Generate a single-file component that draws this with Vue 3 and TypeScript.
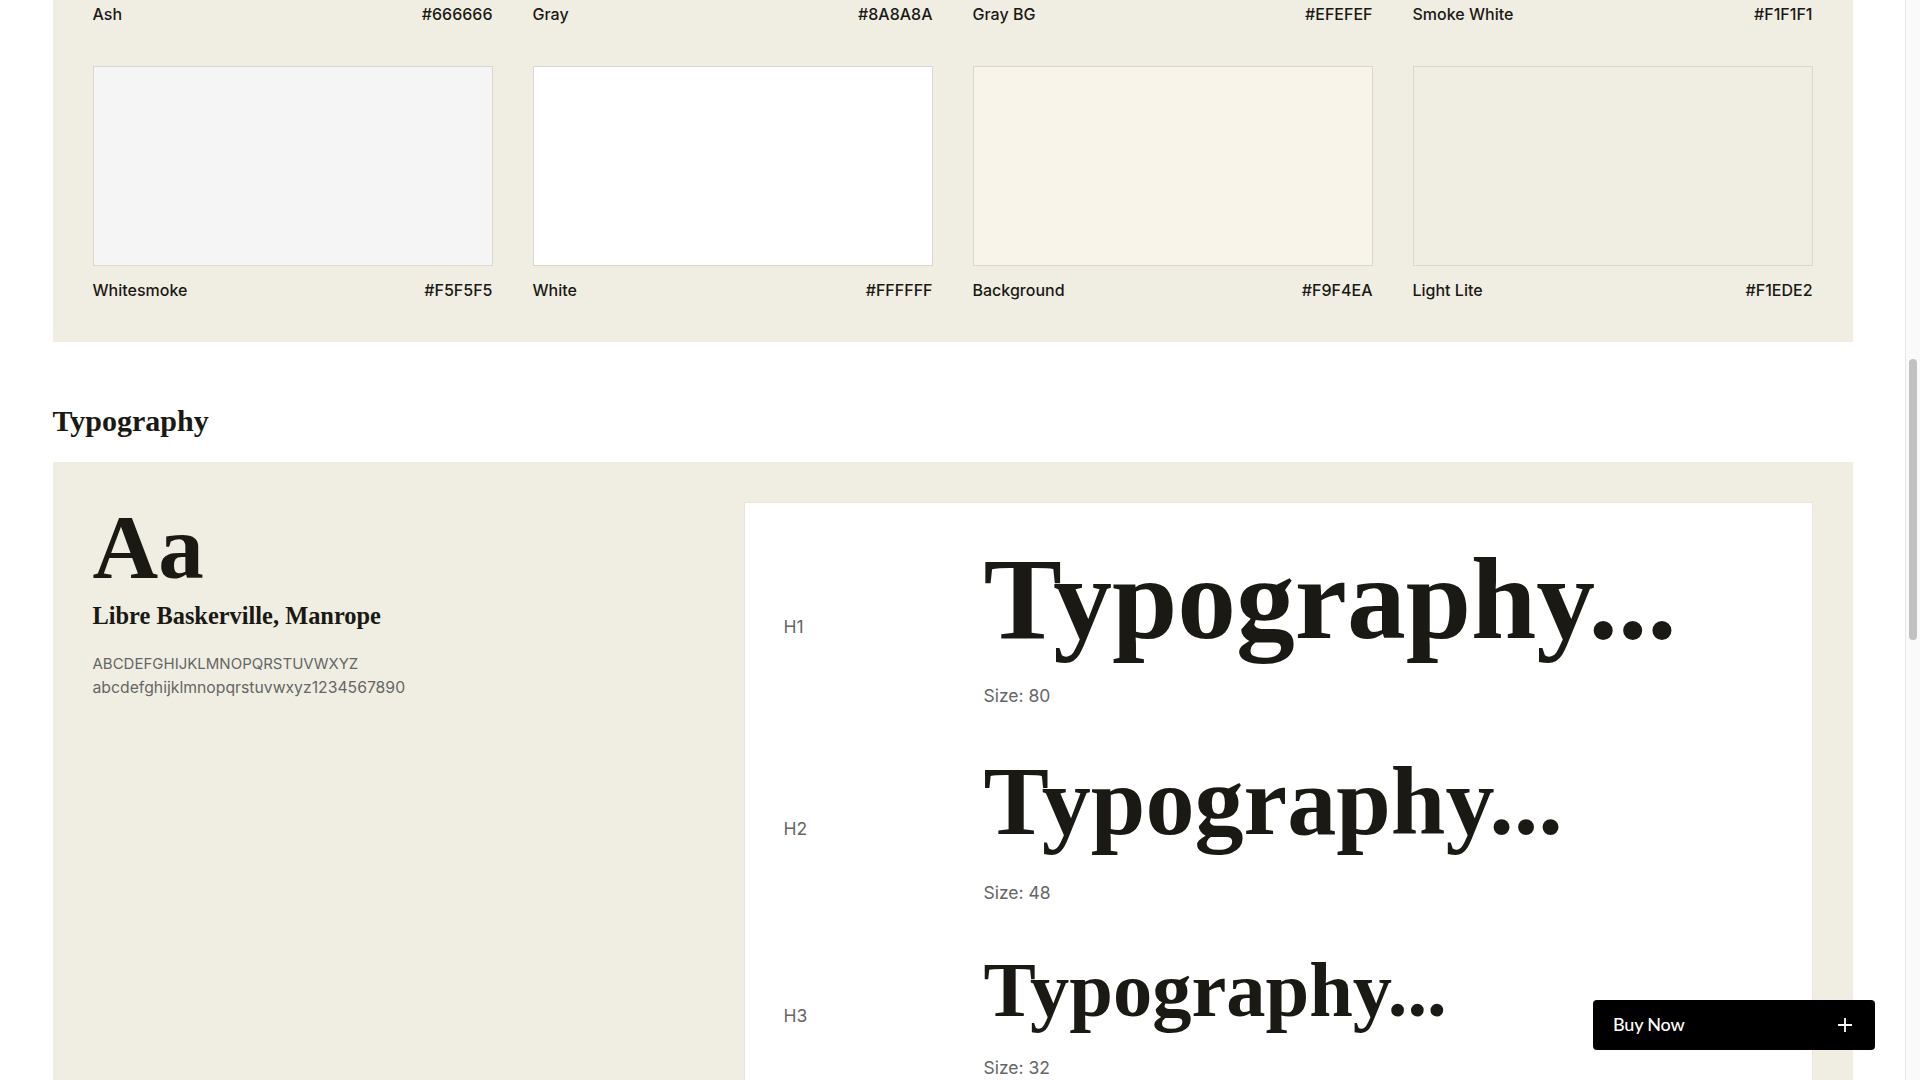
<template>
  <div class="shell">
    <div ref="scroller" class="scroller">
      <div class="page">
        <section class="panel colors">
          <div v-for="c in colors" :key="c.name" class="color">
            <div class="swatch" :style="{ background: c.fill ?? c.hex }"></div>
            <div class="color-meta">
              <span>{{ c.name }}</span>
              <span>{{ c.hex }}</span>
            </div>
          </div>
        </section>

        <h2 class="section-title">Typography</h2>

        <section class="panel type">
          <div class="type-intro">
            <div class="aa">Aa</div>
            <div class="family">Libre Baskerville, Manrope</div>
            <p class="alphabet">
              <span class="upper">ABCDEFGHIJKLMNOPQRSTUVWXYZ</span><br />
              abcdefghijklmnopqrstuvwxyz1234567890
            </p>
          </div>
          <div class="type-card">
            <div v-for="h in headings" :key="h.tag" class="type-row" :class="h.tag">
              <span class="tag">{{ h.label }}</span>
              <div>
                <div class="sample">Typography...</div>
                <div class="size">Size: {{ h.size }}</div>
              </div>
            </div>
          </div>
        </section>
      </div>
    </div>

    <div class="rail"><div class="thumb"></div></div>

    <button class="buy" type="button">
      <span>Buy Now</span>
      <svg width="14" height="14" viewBox="0 0 14 14" fill="none" stroke="#fff" stroke-width="1.8">
        <path d="M7 0v14M0 7h14" />
      </svg>
    </button>
  </div>
</template>

<script setup lang="ts">
import { onMounted, ref } from 'vue'

const scroller = ref<HTMLElement | null>(null)

const colors: { name: string; hex: string; fill?: string }[] = [
  { name: 'Ash', hex: '#666666' },
  { name: 'Gray', hex: '#8A8A8A' },
  { name: 'Gray BG', hex: '#EFEFEF' },
  { name: 'Smoke White', hex: '#F1F1F1' },
  { name: 'Whitesmoke', hex: '#F5F5F5' },
  { name: 'White', hex: '#FFFFFF' },
  { name: 'Background', hex: '#F9F4EA' },
  { name: 'Light Lite', hex: '#F1EDE2', fill: '#F0EEE3' },
]

const headings = [
  { tag: 'h1', label: 'H1', size: 80 },
  { tag: 'h2', label: 'H2', size: 48 },
  { tag: 'h3', label: 'H3', size: 32 },
]

// page is shown scrolled down to the typography section
onMounted(() => {
  if (scroller.value) scroller.value.scrollTop = 1380
})
</script>

<style>
html, body { margin: 0; overflow: hidden; background: #fff; }
</style>

<style scoped>
.shell { display: flex; height: 1080px; background: #fff; font-family: Inter, "Noto Sans", sans-serif; color: #1a1914; }
.scroller { flex: 1; overflow-y: scroll; scrollbar-width: none; }
.rail { width: 15px; flex: none; box-sizing: border-box; padding: 359px 3px 0 3px; background: #fafafa; border-left: 1px solid #e8e8e8; }
.thumb { height: 281px; background: #c1c1c1; border-radius: 4px; }
.page { box-sizing: border-box; min-height: 4151px; max-width: 1800px; margin: 0 auto; padding-top: 1130px; }
.panel { background: #f0eee3; padding: 40px; }

.colors { display: grid; grid-template-columns: repeat(4, 1fr); gap: 40px; }
.swatch { height: 200px; box-sizing: border-box; border: 1px solid #dad8ce; }
.color-meta {
  display: flex; justify-content: space-between; margin-top: 12px;
  font-size: 16px; line-height: 24px; font-weight: 450;
}

.section-title {
  margin: 59px 0 21px; font: 700 30px/40px "Liberation Serif", serif;
}

.type { display: flex; gap: 40px; }
.type-intro { width: 611px; flex: none; }
.aa { font: 700 91px/92px "Liberation Serif", serif; }
.family { font: 700 24.4px/32px "Liberation Serif", serif; margin-top: 6px; }
.alphabet { margin: 20px 0 0; font-size: 15.75px; line-height: 24px; color: #666; }
.upper { font-size: 15px; }

.type-card {
  flex: 1; background: #fff; border: 1px solid #e7e4da; padding: 39px;
  display: flex; flex-direction: column; gap: 42px;
}
.type-row { display: grid; grid-template-columns: 200px 1fr; align-items: center; }
.tag { font-size: 17.5px; color: #666; padding-top: 2px; }
.sample { font-family: "Liberation Serif", serif; font-weight: 700; color: #1a1914; white-space: nowrap; }
.size { font-size: 17.5px; line-height: 24px; color: #666; margin-top: 30px; }
.h1 .sample { font-size: 117.5px; line-height: 112px; }
.h2 .sample { font-size: 98.2px; line-height: 101px; }
.h3 .sample { font-size: 78.5px; line-height: 86px; }
.h3 .size { margin-top: 23px; }
.h3 .tag { padding-top: 4px; }

.buy {
  position: fixed; left: 1593px; top: 1000px; width: 282px; height: 50px;
  box-sizing: border-box; padding: 0 23px 0 20px; border: 0; border-radius: 4px;
  background: #000; color: #fff; display: flex; align-items: center; justify-content: space-between;
  font: 500 18px Lato, sans-serif; letter-spacing: -0.2px;
}
.buy span { margin-top: -2px; }
</style>
